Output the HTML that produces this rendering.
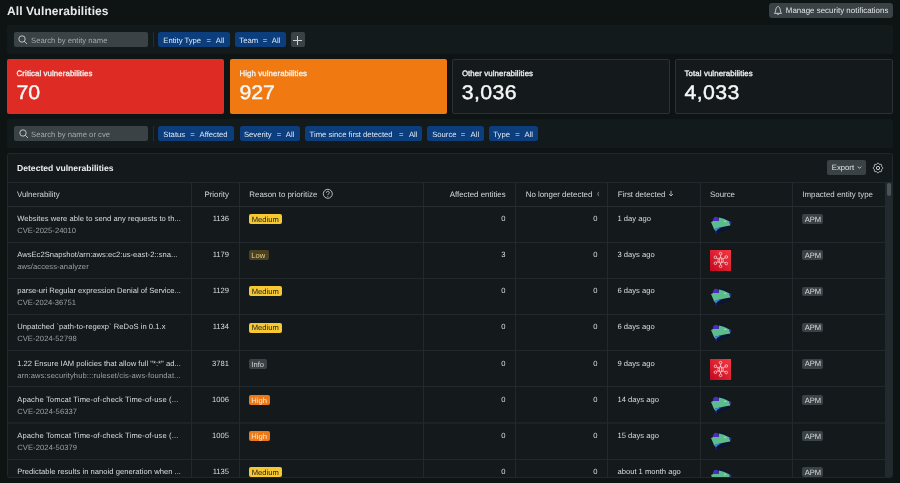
<!DOCTYPE html>
<html><head><meta charset="utf-8"><style>
html,body{margin:0;padding:0;}
body{width:900px;height:483px;overflow:hidden;background:#0e1314;position:relative;font-family:"Liberation Sans", sans-serif;}
#wrap{position:absolute;left:0;top:0;width:900px;height:483px;will-change:transform;}
.t{position:absolute;white-space:nowrap;line-height:1;text-rendering:geometricPrecision;}
.r{position:absolute;}
.clip{position:absolute;left:0;top:0;width:900px;height:476.6px;overflow:hidden;}
</style></head><body><div id="wrap">
<div class="t" style="left:7px;top:4.54px;font-size:12px;color:#e6e8e9;font-weight:bold;letter-spacing:0.070px;">All Vulnerabilities</div><div class="r" style="left:768.9px;top:3.3px;width:124px;height:14.4px;background:#3a4246;border-radius:3px;"></div><svg class="r" style="left:772.9px;top:4.9px" width="10" height="10" viewBox="0 0 10 10"><path d="M2.3 7.4 C2.7 6.6 2.6 4.8 2.9 4 C3.3 2.7 4.1 1.5 5 1.5 C5.9 1.5 6.7 2.7 7.1 4 C7.4 4.8 7.3 6.6 7.7 7.4 L8.7 8.3 H1.3 Z" fill="none" stroke="#d8dbdc" stroke-width="0.85" stroke-linejoin="round"/><path d="M4 9.1 Q5 9.9 6 9.1" fill="none" stroke="#d8dbdc" stroke-width="0.85" stroke-linecap="round"/></svg><div class="t" style="left:785.8px;top:7.31px;font-size:7.9px;color:#e1e4e5;font-weight:normal;letter-spacing:0.030px;">Manage security notifications</div><div class="r" style="left:7px;top:25.2px;width:886px;height:28.8px;background:#131a1c;border-radius:2px;"></div><div class="r" style="left:14px;top:32px;width:134px;height:15px;background:#3a4246;border-radius:2px;"></div><svg class="r" style="left:17.3px;top:34px" width="12" height="12" viewBox="0 0 12 12"><circle cx="5" cy="5" r="3.2" fill="none" stroke="#c3c8cb" stroke-width="0.95"/><path d="M7.3 7.3 L9.7 9.7" stroke="#c3c8cb" stroke-width="0.95" stroke-linecap="round"/></svg><div class="t" style="left:31px;top:36.58px;font-size:7.7px;color:#a3a9ac;font-weight:normal;">Search by entity name</div><div class="r" style="left:153px;top:32px;width:1px;height:15px;background:#262d30;"></div><div class="r" style="left:158.4px;top:32.3px;width:71.19999999999999px;height:14.5px;background:#0c3e7e;border-radius:2.5px;"></div><div class="t" style="left:163.25px;top:36.58px;font-size:7.7px;color:#dfe8f3;font-weight:normal;">Entity Type</div><div class="t" style="left:206.45000000000002px;top:36.58px;font-size:7.7px;color:#dfe8f3;font-weight:normal;">=</div><div class="t" style="left:215.85000000000002px;top:36.58px;font-size:7.7px;color:#dfe8f3;font-weight:normal;">All</div><div class="r" style="left:234.6px;top:32.3px;width:51.400000000000006px;height:14.5px;background:#0c3e7e;border-radius:2.5px;"></div><div class="t" style="left:239.35000000000002px;top:36.58px;font-size:7.7px;color:#dfe8f3;font-weight:normal;">Team</div><div class="t" style="left:262.75px;top:36.58px;font-size:7.7px;color:#dfe8f3;font-weight:normal;">=</div><div class="t" style="left:271.85px;top:36.58px;font-size:7.7px;color:#dfe8f3;font-weight:normal;">All</div><div class="r" style="left:291px;top:32px;width:14px;height:15px;background:#3a4246;border-radius:2px;"></div><div class="r" style="left:297px;top:36px;width:1px;height:9px;background:#cfd3d5;"></div><div class="r" style="left:293px;top:40px;width:9px;height:1px;background:#cfd3d5;"></div><div class="r" style="left:7px;top:59.3px;width:217.3px;height:54.7px;background:#de2b23;border-radius:2px;box-sizing:border-box;"></div><div class="t" style="left:16.6px;top:70.15px;font-size:7.85px;color:#f2f3f3;font-weight:normal;-webkit-text-stroke:0.3px #f2f3f3;letter-spacing:0.090px;">Critical vulnerabilities</div><div class="t" style="left:16.5px;top:82.27px;font-size:21.3px;color:#f6f7f7;font-weight:normal;-webkit-text-stroke:0.45px #f6f7f7;transform:scaleY(0.925);transform-origin:0 18.03px;">70</div><div class="r" style="left:229.9px;top:59.3px;width:217.1px;height:54.7px;background:#f07a11;border-radius:2px;box-sizing:border-box;"></div><div class="t" style="left:239.5px;top:70.15px;font-size:7.85px;color:#f2f3f3;font-weight:normal;-webkit-text-stroke:0.3px #f2f3f3;letter-spacing:0.090px;">High vulnerabilities</div><div class="t" style="left:239.4px;top:82.27px;font-size:21.3px;color:#f6f7f7;font-weight:normal;-webkit-text-stroke:0.45px #f6f7f7;transform:scaleY(0.925);transform-origin:0 18.03px;">927</div><div class="r" style="left:452.3px;top:59.3px;width:217.90000000000003px;height:54.7px;background:#141a1c;border-radius:2px;box-sizing:border-box;border:1px solid #2a3236;"></div><div class="t" style="left:461.90000000000003px;top:70.15px;font-size:7.85px;color:#f2f3f3;font-weight:normal;-webkit-text-stroke:0.3px #f2f3f3;letter-spacing:0.090px;">Other vulnerabilities</div><div class="t" style="left:461.8px;top:82.27px;font-size:21.3px;color:#f6f7f7;font-weight:normal;-webkit-text-stroke:0.45px #f6f7f7;transform:scaleY(0.925);transform-origin:0 18.03px;letter-spacing:0.400px;">3,036</div><div class="r" style="left:675px;top:59.3px;width:217.89999999999998px;height:54.7px;background:#141a1c;border-radius:2px;box-sizing:border-box;border:1px solid #2a3236;"></div><div class="t" style="left:684.6px;top:70.15px;font-size:7.85px;color:#f2f3f3;font-weight:normal;-webkit-text-stroke:0.3px #f2f3f3;letter-spacing:0.090px;">Total vulnerabilities</div><div class="t" style="left:684.5px;top:82.27px;font-size:21.3px;color:#f6f7f7;font-weight:normal;-webkit-text-stroke:0.45px #f6f7f7;transform:scaleY(0.925);transform-origin:0 18.03px;letter-spacing:0.400px;">4,033</div><div class="r" style="left:7px;top:119.3px;width:886px;height:28.7px;background:#131a1c;border-radius:2px;"></div><div class="r" style="left:14px;top:126.2px;width:134px;height:14.5px;background:#3a4246;border-radius:2px;"></div><svg class="r" style="left:17.6px;top:127.8px" width="12" height="12" viewBox="0 0 12 12"><circle cx="5" cy="5" r="3.2" fill="none" stroke="#c3c8cb" stroke-width="0.95"/><path d="M7.3 7.3 L9.7 9.7" stroke="#c3c8cb" stroke-width="0.95" stroke-linecap="round"/></svg><div class="t" style="left:31px;top:130.58px;font-size:7.7px;color:#a3a9ac;font-weight:normal;">Search by name or cve</div><div class="r" style="left:153px;top:126px;width:1px;height:15px;background:#262d30;"></div><div class="r" style="left:158.4px;top:126.4px;width:76.0px;height:14.199999999999989px;background:#0c3e7e;border-radius:2.5px;"></div><div class="t" style="left:163.35000000000002px;top:130.58px;font-size:7.7px;color:#dfe8f3;font-weight:normal;">Status</div><div class="t" style="left:190.25px;top:130.58px;font-size:7.7px;color:#dfe8f3;font-weight:normal;">=</div><div class="t" style="left:199.55px;top:130.58px;font-size:7.7px;color:#dfe8f3;font-weight:normal;">Affected</div><div class="r" style="left:239.6px;top:126.4px;width:60.00000000000003px;height:14.199999999999989px;background:#0c3e7e;border-radius:2.5px;"></div><div class="t" style="left:243.95000000000002px;top:130.58px;font-size:7.7px;color:#dfe8f3;font-weight:normal;">Severity</div><div class="t" style="left:276.85px;top:130.58px;font-size:7.7px;color:#dfe8f3;font-weight:normal;">=</div><div class="t" style="left:285.75px;top:130.58px;font-size:7.7px;color:#dfe8f3;font-weight:normal;">All</div><div class="r" style="left:304.6px;top:126.4px;width:117.89999999999998px;height:14.199999999999989px;background:#0c3e7e;border-radius:2.5px;"></div><div class="t" style="left:309.55px;top:130.58px;font-size:7.7px;color:#dfe8f3;font-weight:normal;">Time since first detected</div><div class="t" style="left:398.95px;top:130.58px;font-size:7.7px;color:#dfe8f3;font-weight:normal;">=</div><div class="t" style="left:408.95px;top:130.58px;font-size:7.7px;color:#dfe8f3;font-weight:normal;">All</div><div class="r" style="left:427.4px;top:126.4px;width:56.60000000000002px;height:14.199999999999989px;background:#0c3e7e;border-radius:2.5px;"></div><div class="t" style="left:432.15000000000003px;top:130.58px;font-size:7.7px;color:#dfe8f3;font-weight:normal;">Source</div><div class="t" style="left:460.75px;top:130.58px;font-size:7.7px;color:#dfe8f3;font-weight:normal;">=</div><div class="t" style="left:470.55px;top:130.58px;font-size:7.7px;color:#dfe8f3;font-weight:normal;">All</div><div class="r" style="left:489.2px;top:126.4px;width:49.00000000000006px;height:14.199999999999989px;background:#0c3e7e;border-radius:2.5px;"></div><div class="t" style="left:493.35px;top:130.58px;font-size:7.7px;color:#dfe8f3;font-weight:normal;">Type</div><div class="t" style="left:515.15px;top:130.58px;font-size:7.7px;color:#dfe8f3;font-weight:normal;">=</div><div class="t" style="left:524.4499999999999px;top:130.58px;font-size:7.7px;color:#dfe8f3;font-weight:normal;">All</div><div class="r" style="left:7px;top:153px;width:886px;height:324.5px;background:#141a1c;box-sizing:border-box;border:1px solid #20282b;border-radius:2.5px;"></div><div class="t" style="left:17px;top:164.02px;font-size:8.6px;color:#eceeef;font-weight:bold;">Detected vulnerabilities</div><div class="r" style="left:826.5px;top:160px;width:39.3px;height:15px;background:#3a4246;border-radius:2px;"></div><div class="t" style="left:831.8px;top:163.98px;font-size:7.7px;color:#e1e4e5;font-weight:normal;">Export</div><svg class="r" style="left:856.5px;top:164.5px" width="5" height="5" viewBox="0 0 5 5"><path d="M0.8 1.6 L2.5 3.3 L4.2 1.6" fill="none" stroke="#e1e4e5" stroke-width="0.8"/></svg><svg class="r" style="left:872px;top:161.7px" width="12" height="12" viewBox="0 0 12 12"><path d="M10.80 6.00 L10.65 6.46 L10.27 6.85 L9.86 7.17 L9.60 7.49 L9.56 7.90 L9.62 8.42 L9.61 8.96 L9.39 9.39 L8.96 9.61 L8.42 9.62 L7.90 9.56 L7.49 9.60 L7.17 9.86 L6.85 10.27 L6.46 10.65 L6.00 10.80 L5.54 10.65 L5.15 10.27 L4.83 9.86 L4.51 9.60 L4.10 9.56 L3.58 9.62 L3.04 9.61 L2.61 9.39 L2.39 8.96 L2.38 8.42 L2.44 7.90 L2.40 7.49 L2.14 7.17 L1.73 6.85 L1.35 6.46 L1.20 6.00 L1.35 5.54 L1.73 5.15 L2.14 4.83 L2.40 4.51 L2.44 4.10 L2.38 3.58 L2.39 3.04 L2.61 2.61 L3.04 2.39 L3.58 2.38 L4.10 2.44 L4.51 2.40 L4.83 2.14 L5.15 1.73 L5.54 1.35 L6.00 1.20 L6.46 1.35 L6.85 1.73 L7.17 2.14 L7.49 2.40 L7.90 2.44 L8.42 2.38 L8.96 2.39 L9.39 2.61 L9.61 3.04 L9.62 3.58 L9.56 4.10 L9.60 4.51 L9.86 4.83 L10.27 5.15 L10.65 5.54Z" fill="none" stroke="#d2d6d8" stroke-width="0.95" stroke-linejoin="round"/><circle cx="6" cy="6" r="1.65" fill="none" stroke="#d2d6d8" stroke-width="0.95"/></svg><div class="clip"><div class="r" style="left:8px;top:182px;width:877px;height:1px;background:#22292c;"></div><div class="r" style="left:885px;top:182px;width:7px;height:294.5px;background:#232a2e;border-bottom-right-radius:2px;"></div><div class="r" style="left:886.7px;top:183px;width:4.3px;height:12.5px;background:#4a5458;border-radius:2px;"></div><div class="r" style="left:191px;top:182px;width:1px;height:295px;background:#22292c;"></div><div class="r" style="left:239px;top:182px;width:1px;height:295px;background:#22292c;"></div><div class="r" style="left:423px;top:182px;width:1px;height:295px;background:#22292c;"></div><div class="r" style="left:515px;top:182px;width:1px;height:295px;background:#22292c;"></div><div class="r" style="left:607px;top:182px;width:1px;height:295px;background:#22292c;"></div><div class="r" style="left:700px;top:182px;width:1px;height:295px;background:#22292c;"></div><div class="r" style="left:792px;top:182px;width:1px;height:295px;background:#22292c;"></div><div class="t" style="left:17px;top:191.01px;font-size:7.9px;color:#d3d7d9;font-weight:normal;">Vulnerability</div><div class="t" style="right:671px;top:191.01px;font-size:7.9px;color:#d3d7d9;font-weight:normal;">Priority</div><div class="t" style="left:249.3px;top:191.01px;font-size:7.9px;color:#d3d7d9;font-weight:normal;">Reason to prioritize</div><svg class="r" style="left:322.2px;top:188.3px" width="11.6" height="11.6" viewBox="0 0 11.6 11.6"><circle cx="5.8" cy="5.8" r="4.5" fill="none" stroke="#c8cccf" stroke-width="0.9"/><path d="M4.4 4.7 a1.45 1.45 0 1 1 2.1 1.3 c-0.5 0.25 -0.7 0.55 -0.7 1.1" fill="none" stroke="#c8cccf" stroke-width="0.9"/><circle cx="5.8" cy="8.3" r="0.5" fill="#c8cccf"/></svg><div class="t" style="right:394.3px;top:191.01px;font-size:7.9px;color:#d3d7d9;font-weight:normal;">Affected entities</div><div class="t" style="left:525.7px;top:191.01px;font-size:7.9px;color:#d3d7d9;font-weight:normal;">No longer detected</div><svg class="r" style="left:596px;top:190.5px" width="4" height="6" viewBox="0 0 4 6"><path d="M2.9 0.9 C1.6 1.8 1.6 4.2 2.9 5.1" fill="none" stroke="#8d9497" stroke-width="0.9"/></svg><div class="t" style="left:617.7px;top:191.01px;font-size:7.9px;color:#d3d7d9;font-weight:normal;">First detected</div><svg class="r" style="left:668px;top:190px" width="6" height="7" viewBox="0 0 6 7"><path d="M3 0.8 V6 M1 4 L3 6 L5 4" fill="none" stroke="#c8cccf" stroke-width="0.8"/></svg><div class="t" style="left:710px;top:191.01px;font-size:7.9px;color:#d3d7d9;font-weight:normal;">Source</div><div class="t" style="left:802.3px;top:191.01px;font-size:7.9px;color:#d3d7d9;font-weight:normal;">Impacted entity type</div><div class="r" style="left:8px;top:206px;width:877px;height:1px;background:#272e31;"></div><div class="t" style="left:17.2px;top:214.82px;font-size:7.6px;color:#d9dcdd;font-weight:normal;letter-spacing:0.036px;">Websites were able to send any requests to th...</div><div class="t" style="left:17.2px;top:226.82px;font-size:7.6px;color:#9aa0a3;font-weight:normal;letter-spacing:0.015px;">CVE-2025-24010</div><div class="t" style="right:671px;top:214.82px;font-size:7.6px;color:#d9dcdd;font-weight:normal;">1136</div><div class="r" style="left:249px;top:214.1px;width:33.1px;height:9.9px;background:#f6c933;border-radius:2px;"></div><div class="t" style="left:251.8px;top:215.82px;font-size:7.6px;color:#1b1b1b;font-weight:normal;">Medium</div><div class="t" style="right:394.5px;top:214.82px;font-size:7.6px;color:#d9dcdd;font-weight:normal;">0</div><div class="t" style="right:302.5px;top:214.82px;font-size:7.6px;color:#d9dcdd;font-weight:normal;">0</div><div class="t" style="left:617.5px;top:214.82px;font-size:7.6px;color:#d9dcdd;font-weight:normal;">1 day ago</div><svg class="r" style="left:706px;top:212px" width="30" height="26" viewBox="0 0 557 483"><path d="M232 100 L320 60 L408 152 C360 125 300 106 232 100 Z" fill="#0b1636"/><path d="M150 322 C200 306 260 290 300 280 L452 250 L442 302 L200 406 Z" fill="#0a1434"/><path d="M93 185 L135 165 L235 165 L238 102 C290 112 360 128 442 182 L452 250 C380 262 300 276 270 285 C220 296 180 310 150 322 Z" fill="#5dbc8f"/><path d="M126 166 C123 120 150 88 185 86 C216 86 236 110 239 166 Z" fill="#4a2cc4"/><circle cx="448" cy="198" r="20" fill="#4a2cc4"/><path d="M146 318 C200 304 250 292 302 279 C246 300 206 326 186 362 Z" fill="#3b8fe8"/><path d="M168 340 C190 360 202 386 196 406 L174 356 Z" fill="#4a2cc4"/><circle cx="355" cy="175" r="13" fill="#d2ebde"/></svg><div class="r" style="left:802.2px;top:214.3px;width:21.1px;height:9.6px;background:#3a4246;border-radius:2px;"></div><div class="t" style="left:804.7px;top:215.72px;font-size:7.6px;color:#d7dbdd;font-weight:normal;">APM</div><div class="r" style="left:8px;top:242px;width:877px;height:1px;background:#22292c;"></div><div class="t" style="left:17.2px;top:250.99px;font-size:7.6px;color:#d9dcdd;font-weight:normal;letter-spacing:0.028px;">AwsEc2Snapshot/arn:aws:ec2:us-east-2::sna...</div><div class="t" style="left:17.2px;top:262.99px;font-size:7.6px;color:#9aa0a3;font-weight:normal;letter-spacing:0.056px;">aws/access-analyzer</div><div class="t" style="right:671px;top:250.99px;font-size:7.6px;color:#d9dcdd;font-weight:normal;">1179</div><div class="r" style="left:249px;top:250.27px;width:19.6px;height:9.9px;background:#4a4122;border-radius:2px;"></div><div class="t" style="left:251.3px;top:251.99px;font-size:7.6px;color:#e3d08a;font-weight:normal;">Low</div><div class="t" style="right:394.5px;top:250.99px;font-size:7.6px;color:#d9dcdd;font-weight:normal;">3</div><div class="t" style="right:302.5px;top:250.99px;font-size:7.6px;color:#d9dcdd;font-weight:normal;">0</div><div class="t" style="left:617.5px;top:250.99px;font-size:7.6px;color:#d9dcdd;font-weight:normal;">3 days ago</div><svg class="r" style="left:710px;top:250.17000000000002px" width="21" height="21" viewBox="0 0 21 21"><defs><linearGradient id="rg1" x1="0" y1="1" x2="1" y2="0"><stop offset="0" stop-color="#c4071f"/><stop offset="1" stop-color="#f43a44"/></linearGradient></defs><rect width="21" height="21" fill="url(#rg1)"/><g fill="none" stroke="#f8dcde" stroke-width="0.75"><circle cx="10.6" cy="10.4" r="2.7"/><ellipse cx="10.6" cy="10.4" rx="1.1" ry="2.7"/><path d="M10.6 7.7 V4.9 M10.6 13.1 V15 M8.3 9.1 L6.5 8 M12.9 9.1 L15.1 7.7 M8.3 11.7 L6.5 12.6 M12.9 11.7 L15.1 12.9"/><circle cx="10.6" cy="3.6" r="1.3"/><circle cx="10.6" cy="16.3" r="1.3"/><circle cx="5.4" cy="7.3" r="1.3"/><circle cx="16.3" cy="7.0" r="1.3"/><circle cx="5.4" cy="13.2" r="1.3"/><circle cx="16.3" cy="13.5" r="1.3"/></g></svg><div class="r" style="left:802.2px;top:250.47000000000003px;width:21.1px;height:9.6px;background:#3a4246;border-radius:2px;"></div><div class="t" style="left:804.7px;top:251.89px;font-size:7.6px;color:#d7dbdd;font-weight:normal;">APM</div><div class="r" style="left:8px;top:278px;width:877px;height:1px;background:#22292c;"></div><div class="t" style="left:17.2px;top:287.16px;font-size:7.6px;color:#d9dcdd;font-weight:normal;letter-spacing:0.008px;">parse-uri Regular expression Denial of Service...</div><div class="t" style="left:17.2px;top:299.16px;font-size:7.6px;color:#9aa0a3;font-weight:normal;">CVE-2024-36751</div><div class="t" style="right:671px;top:287.16px;font-size:7.6px;color:#d9dcdd;font-weight:normal;">1129</div><div class="r" style="left:249px;top:286.44000000000005px;width:33.1px;height:9.9px;background:#f6c933;border-radius:2px;"></div><div class="t" style="left:251.8px;top:288.16px;font-size:7.6px;color:#1b1b1b;font-weight:normal;">Medium</div><div class="t" style="right:394.5px;top:287.16px;font-size:7.6px;color:#d9dcdd;font-weight:normal;">0</div><div class="t" style="right:302.5px;top:287.16px;font-size:7.6px;color:#d9dcdd;font-weight:normal;">0</div><div class="t" style="left:617.5px;top:287.16px;font-size:7.6px;color:#d9dcdd;font-weight:normal;">6 days ago</div><svg class="r" style="left:706px;top:284px" width="30" height="26" viewBox="0 0 557 483"><path d="M232 100 L320 60 L408 152 C360 125 300 106 232 100 Z" fill="#0b1636"/><path d="M150 322 C200 306 260 290 300 280 L452 250 L442 302 L200 406 Z" fill="#0a1434"/><path d="M93 185 L135 165 L235 165 L238 102 C290 112 360 128 442 182 L452 250 C380 262 300 276 270 285 C220 296 180 310 150 322 Z" fill="#5dbc8f"/><path d="M126 166 C123 120 150 88 185 86 C216 86 236 110 239 166 Z" fill="#4a2cc4"/><circle cx="448" cy="198" r="20" fill="#4a2cc4"/><path d="M146 318 C200 304 250 292 302 279 C246 300 206 326 186 362 Z" fill="#3b8fe8"/><path d="M168 340 C190 360 202 386 196 406 L174 356 Z" fill="#4a2cc4"/><circle cx="355" cy="175" r="13" fill="#d2ebde"/></svg><div class="r" style="left:802.2px;top:286.64000000000004px;width:21.1px;height:9.6px;background:#3a4246;border-radius:2px;"></div><div class="t" style="left:804.7px;top:288.06px;font-size:7.6px;color:#d7dbdd;font-weight:normal;">APM</div><div class="r" style="left:8px;top:314px;width:877px;height:1px;background:#22292c;"></div><div class="t" style="left:17.2px;top:323.33px;font-size:7.6px;color:#d9dcdd;font-weight:normal;letter-spacing:0.045px;">Unpatched `path-to-regexp` ReDoS in 0.1.x</div><div class="t" style="left:17.2px;top:335.33px;font-size:7.6px;color:#9aa0a3;font-weight:normal;letter-spacing:0.062px;">CVE-2024-52798</div><div class="t" style="right:671px;top:323.33px;font-size:7.6px;color:#d9dcdd;font-weight:normal;">1134</div><div class="r" style="left:249px;top:322.61px;width:33.1px;height:9.9px;background:#f6c933;border-radius:2px;"></div><div class="t" style="left:251.8px;top:324.33px;font-size:7.6px;color:#1b1b1b;font-weight:normal;">Medium</div><div class="t" style="right:394.5px;top:323.33px;font-size:7.6px;color:#d9dcdd;font-weight:normal;">0</div><div class="t" style="right:302.5px;top:323.33px;font-size:7.6px;color:#d9dcdd;font-weight:normal;">0</div><div class="t" style="left:617.5px;top:323.33px;font-size:7.6px;color:#d9dcdd;font-weight:normal;">6 days ago</div><svg class="r" style="left:706px;top:320px" width="30" height="26" viewBox="0 0 557 483"><path d="M232 100 L320 60 L408 152 C360 125 300 106 232 100 Z" fill="#0b1636"/><path d="M150 322 C200 306 260 290 300 280 L452 250 L442 302 L200 406 Z" fill="#0a1434"/><path d="M93 185 L135 165 L235 165 L238 102 C290 112 360 128 442 182 L452 250 C380 262 300 276 270 285 C220 296 180 310 150 322 Z" fill="#5dbc8f"/><path d="M126 166 C123 120 150 88 185 86 C216 86 236 110 239 166 Z" fill="#4a2cc4"/><circle cx="448" cy="198" r="20" fill="#4a2cc4"/><path d="M146 318 C200 304 250 292 302 279 C246 300 206 326 186 362 Z" fill="#3b8fe8"/><path d="M168 340 C190 360 202 386 196 406 L174 356 Z" fill="#4a2cc4"/><circle cx="355" cy="175" r="13" fill="#d2ebde"/></svg><div class="r" style="left:802.2px;top:322.81px;width:21.1px;height:9.6px;background:#3a4246;border-radius:2px;"></div><div class="t" style="left:804.7px;top:324.23px;font-size:7.6px;color:#d7dbdd;font-weight:normal;">APM</div><div class="r" style="left:8px;top:350px;width:877px;height:1px;background:#22292c;"></div><div class="t" style="left:17.2px;top:359.50px;font-size:7.6px;color:#d9dcdd;font-weight:normal;letter-spacing:0.024px;">1.22 Ensure IAM policies that allow full "*:*" ad...</div><div class="t" style="left:17.2px;top:371.50px;font-size:7.6px;color:#9aa0a3;font-weight:normal;letter-spacing:0.111px;">arn:aws:securityhub:::ruleset/cis-aws-foundat...</div><div class="t" style="right:671px;top:359.50px;font-size:7.6px;color:#d9dcdd;font-weight:normal;">3781</div><div class="r" style="left:249px;top:358.78000000000003px;width:18px;height:9.9px;background:#3a4246;border-radius:2px;"></div><div class="t" style="left:251.3px;top:360.50px;font-size:7.6px;color:#cfd4d6;font-weight:normal;">Info</div><div class="t" style="right:394.5px;top:359.50px;font-size:7.6px;color:#d9dcdd;font-weight:normal;">0</div><div class="t" style="right:302.5px;top:359.50px;font-size:7.6px;color:#d9dcdd;font-weight:normal;">0</div><div class="t" style="left:617.5px;top:359.50px;font-size:7.6px;color:#d9dcdd;font-weight:normal;">9 days ago</div><svg class="r" style="left:710px;top:358.68px" width="21" height="21" viewBox="0 0 21 21"><defs><linearGradient id="rg4" x1="0" y1="1" x2="1" y2="0"><stop offset="0" stop-color="#c4071f"/><stop offset="1" stop-color="#f43a44"/></linearGradient></defs><rect width="21" height="21" fill="url(#rg4)"/><g fill="none" stroke="#f8dcde" stroke-width="0.75"><circle cx="10.6" cy="10.4" r="2.7"/><ellipse cx="10.6" cy="10.4" rx="1.1" ry="2.7"/><path d="M10.6 7.7 V4.9 M10.6 13.1 V15 M8.3 9.1 L6.5 8 M12.9 9.1 L15.1 7.7 M8.3 11.7 L6.5 12.6 M12.9 11.7 L15.1 12.9"/><circle cx="10.6" cy="3.6" r="1.3"/><circle cx="10.6" cy="16.3" r="1.3"/><circle cx="5.4" cy="7.3" r="1.3"/><circle cx="16.3" cy="7.0" r="1.3"/><circle cx="5.4" cy="13.2" r="1.3"/><circle cx="16.3" cy="13.5" r="1.3"/></g></svg><div class="r" style="left:802.2px;top:358.98px;width:21.1px;height:9.6px;background:#3a4246;border-radius:2px;"></div><div class="t" style="left:804.7px;top:360.40px;font-size:7.6px;color:#d7dbdd;font-weight:normal;">APM</div><div class="r" style="left:8px;top:386px;width:877px;height:1px;background:#22292c;"></div><div class="t" style="left:17.2px;top:395.67px;font-size:7.6px;color:#d9dcdd;font-weight:normal;letter-spacing:0.140px;">Apache Tomcat Time-of-check Time-of-use (...</div><div class="t" style="left:17.2px;top:407.67px;font-size:7.6px;color:#9aa0a3;font-weight:normal;letter-spacing:0.092px;">CVE-2024-56337</div><div class="t" style="right:671px;top:395.67px;font-size:7.6px;color:#d9dcdd;font-weight:normal;">1006</div><div class="r" style="left:249px;top:394.95000000000005px;width:20.9px;height:9.9px;background:#ee7a17;border-radius:2px;"></div><div class="t" style="left:251.3px;top:396.67px;font-size:7.6px;color:#fbe9d8;font-weight:normal;">High</div><div class="t" style="right:394.5px;top:395.67px;font-size:7.6px;color:#d9dcdd;font-weight:normal;">0</div><div class="t" style="right:302.5px;top:395.67px;font-size:7.6px;color:#d9dcdd;font-weight:normal;">0</div><div class="t" style="left:617.5px;top:395.67px;font-size:7.6px;color:#d9dcdd;font-weight:normal;">14 days ago</div><svg class="r" style="left:706px;top:392px" width="30" height="26" viewBox="0 0 557 483"><path d="M232 100 L320 60 L408 152 C360 125 300 106 232 100 Z" fill="#0b1636"/><path d="M150 322 C200 306 260 290 300 280 L452 250 L442 302 L200 406 Z" fill="#0a1434"/><path d="M93 185 L135 165 L235 165 L238 102 C290 112 360 128 442 182 L452 250 C380 262 300 276 270 285 C220 296 180 310 150 322 Z" fill="#5dbc8f"/><path d="M126 166 C123 120 150 88 185 86 C216 86 236 110 239 166 Z" fill="#4a2cc4"/><circle cx="448" cy="198" r="20" fill="#4a2cc4"/><path d="M146 318 C200 304 250 292 302 279 C246 300 206 326 186 362 Z" fill="#3b8fe8"/><path d="M168 340 C190 360 202 386 196 406 L174 356 Z" fill="#4a2cc4"/><circle cx="355" cy="175" r="13" fill="#d2ebde"/></svg><div class="r" style="left:802.2px;top:395.15000000000003px;width:21.1px;height:9.6px;background:#3a4246;border-radius:2px;"></div><div class="t" style="left:804.7px;top:396.57px;font-size:7.6px;color:#d7dbdd;font-weight:normal;">APM</div><div class="r" style="left:8px;top:422px;width:877px;height:1px;background:#22292c;opacity:0.6;"></div><div class="r" style="left:8px;top:423px;width:877px;height:1px;background:#22292c;opacity:0.6;"></div><div class="t" style="left:17.2px;top:431.84px;font-size:7.6px;color:#d9dcdd;font-weight:normal;letter-spacing:0.140px;">Apache Tomcat Time-of-check Time-of-use (...</div><div class="t" style="left:17.2px;top:443.84px;font-size:7.6px;color:#9aa0a3;font-weight:normal;letter-spacing:0.092px;">CVE-2024-50379</div><div class="t" style="right:671px;top:431.84px;font-size:7.6px;color:#d9dcdd;font-weight:normal;">1005</div><div class="r" style="left:249px;top:431.12px;width:20.9px;height:9.9px;background:#ee7a17;border-radius:2px;"></div><div class="t" style="left:251.3px;top:432.84px;font-size:7.6px;color:#fbe9d8;font-weight:normal;">High</div><div class="t" style="right:394.5px;top:431.84px;font-size:7.6px;color:#d9dcdd;font-weight:normal;">0</div><div class="t" style="right:302.5px;top:431.84px;font-size:7.6px;color:#d9dcdd;font-weight:normal;">0</div><div class="t" style="left:617.5px;top:431.84px;font-size:7.6px;color:#d9dcdd;font-weight:normal;">15 days ago</div><svg class="r" style="left:706px;top:428px" width="30" height="26" viewBox="0 0 557 483"><path d="M232 100 L320 60 L408 152 C360 125 300 106 232 100 Z" fill="#0b1636"/><path d="M150 322 C200 306 260 290 300 280 L452 250 L442 302 L200 406 Z" fill="#0a1434"/><path d="M93 185 L135 165 L235 165 L238 102 C290 112 360 128 442 182 L452 250 C380 262 300 276 270 285 C220 296 180 310 150 322 Z" fill="#5dbc8f"/><path d="M126 166 C123 120 150 88 185 86 C216 86 236 110 239 166 Z" fill="#4a2cc4"/><circle cx="448" cy="198" r="20" fill="#4a2cc4"/><path d="M146 318 C200 304 250 292 302 279 C246 300 206 326 186 362 Z" fill="#3b8fe8"/><path d="M168 340 C190 360 202 386 196 406 L174 356 Z" fill="#4a2cc4"/><circle cx="355" cy="175" r="13" fill="#d2ebde"/></svg><div class="r" style="left:802.2px;top:431.32px;width:21.1px;height:9.6px;background:#3a4246;border-radius:2px;"></div><div class="t" style="left:804.7px;top:432.74px;font-size:7.6px;color:#d7dbdd;font-weight:normal;">APM</div><div class="r" style="left:8px;top:459px;width:877px;height:1px;background:#22292c;"></div><div class="t" style="left:17.2px;top:468.01px;font-size:7.6px;color:#d9dcdd;font-weight:normal;letter-spacing:0.035px;">Predictable results in nanoid generation when ...</div><div class="t" style="right:671px;top:468.01px;font-size:7.6px;color:#d9dcdd;font-weight:normal;">1135</div><div class="r" style="left:249px;top:467.29px;width:33.1px;height:9.9px;background:#f6c933;border-radius:2px;"></div><div class="t" style="left:251.8px;top:469.01px;font-size:7.6px;color:#1b1b1b;font-weight:normal;">Medium</div><div class="t" style="right:394.5px;top:468.01px;font-size:7.6px;color:#d9dcdd;font-weight:normal;">0</div><div class="t" style="right:302.5px;top:468.01px;font-size:7.6px;color:#d9dcdd;font-weight:normal;">0</div><div class="t" style="left:617.5px;top:468.01px;font-size:7.6px;color:#d9dcdd;font-weight:normal;">about 1 month ago</div><svg class="r" style="left:706px;top:465px" width="30" height="26" viewBox="0 0 557 483"><path d="M232 100 L320 60 L408 152 C360 125 300 106 232 100 Z" fill="#0b1636"/><path d="M150 322 C200 306 260 290 300 280 L452 250 L442 302 L200 406 Z" fill="#0a1434"/><path d="M93 185 L135 165 L235 165 L238 102 C290 112 360 128 442 182 L452 250 C380 262 300 276 270 285 C220 296 180 310 150 322 Z" fill="#5dbc8f"/><path d="M126 166 C123 120 150 88 185 86 C216 86 236 110 239 166 Z" fill="#4a2cc4"/><circle cx="448" cy="198" r="20" fill="#4a2cc4"/><path d="M146 318 C200 304 250 292 302 279 C246 300 206 326 186 362 Z" fill="#3b8fe8"/><path d="M168 340 C190 360 202 386 196 406 L174 356 Z" fill="#4a2cc4"/><circle cx="355" cy="175" r="13" fill="#d2ebde"/></svg><div class="r" style="left:802.2px;top:467.49px;width:21.1px;height:9.6px;background:#3a4246;border-radius:2px;"></div><div class="t" style="left:804.7px;top:468.91px;font-size:7.6px;color:#d7dbdd;font-weight:normal;">APM</div></div>
</div></body></html>
